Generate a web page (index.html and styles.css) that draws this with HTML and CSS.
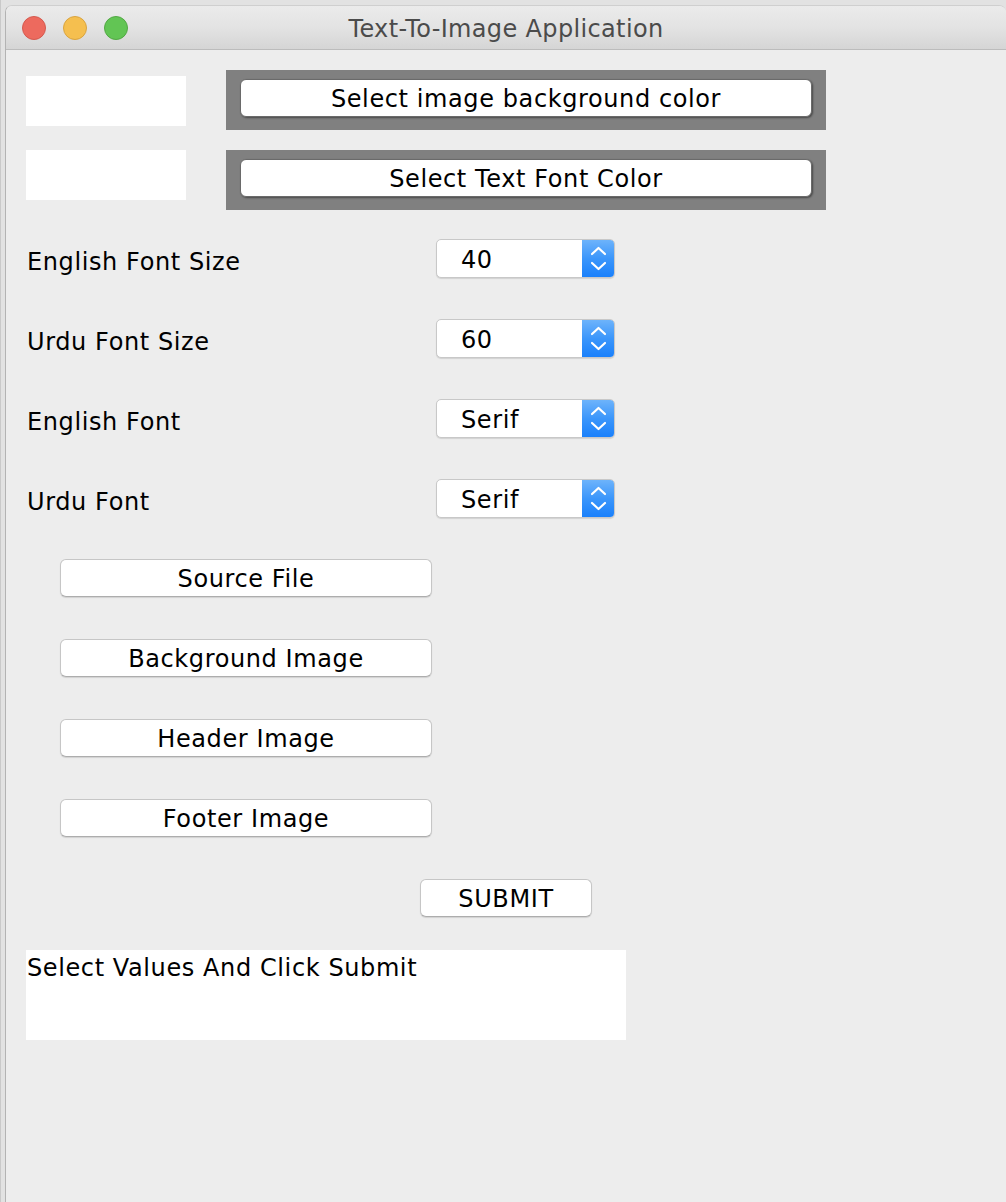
FILE: index.html
```html
<!DOCTYPE html>
<html>
<head>
<meta charset="utf-8">
<title>Text-To-Image Application</title>
<link rel="stylesheet" href="styles.css">
</head>
<body>
<div class="desktop">
  <div class="window">
    <div class="titlebar">
      <div class="lights">
        <span class="light red"></span>
        <span class="light yellow"></span>
        <span class="light green"></span>
      </div>
      <div class="title">Text-To-Image Application</div>
      <div></div>
    </div>
    <div class="content">
      <div class="color-row first">
        <div class="swatch offset"></div>
        <div class="panel"><button class="btn wide">Select image background color</button></div>
      </div>
      <div class="color-row second">
        <div class="swatch"></div>
        <div class="panel"><button class="btn wide">Select Text Font Color</button></div>
      </div>

      <div class="field first-field">
        <div class="label">English Font Size</div>
        <div class="combo"><span class="combo-value">40</span><span class="combo-arrows"><svg width="32" height="37" viewBox="0 0 32 37"><polyline points="10,14 16.5,8 23,14" /><polyline points="10,23 16.5,29 23,23" /></svg></span></div>
      </div>
      <div class="field">
        <div class="label">Urdu Font Size</div>
        <div class="combo"><span class="combo-value">60</span><span class="combo-arrows"><svg width="32" height="37" viewBox="0 0 32 37"><polyline points="10,14 16.5,8 23,14" /><polyline points="10,23 16.5,29 23,23" /></svg></span></div>
      </div>
      <div class="field">
        <div class="label">English Font</div>
        <div class="combo"><span class="combo-value">Serif</span><span class="combo-arrows"><svg width="32" height="37" viewBox="0 0 32 37"><polyline points="10,14 16.5,8 23,14" /><polyline points="10,23 16.5,29 23,23" /></svg></span></div>
      </div>
      <div class="field">
        <div class="label">Urdu Font</div>
        <div class="combo"><span class="combo-value">Serif</span><span class="combo-arrows"><svg width="32" height="37" viewBox="0 0 32 37"><polyline points="10,14 16.5,8 23,14" /><polyline points="10,23 16.5,29 23,23" /></svg></span></div>
      </div>

      <div class="file-buttons">
        <button class="btn file">Source File</button>
        <button class="btn file">Background Image</button>
        <button class="btn file">Header Image</button>
        <button class="btn file">Footer Image</button>
      </div>

      <div class="submit-row">
        <button class="btn submit">SUBMIT</button>
      </div>

      <div class="status">Select Values And Click Submit</div>
    </div>
  </div>
</div>
</body>
</html>
```

FILE: styles.css
```css
html, body {
  margin: 0;
  padding: 0;
}
body {
  width: 1006px;
  height: 1202px;
  overflow: hidden;
  background: #e3e3e3;
  font-family: "DejaVu Sans", "Liberation Sans", sans-serif;
}
.desktop {
  display: flex;
  height: 1202px;
  background: linear-gradient(to right, #c9c9c9 0, #c9c9c9 1px, #e2e2e2 1px, #e2e2e2 100%);
}
.window {
  flex: 1;
  margin-top: 5px;
  margin-left: 5px;
  border-left: 1px solid #b3b3b3;
  border-top: 1px solid #cfcfcf;
  border-top-left-radius: 7px;
  border-top-right-radius: 7px;
  background: #ededed;
  overflow: hidden;
  display: flex;
  flex-direction: column;
}
.titlebar {
  height: 43px;
  flex: 0 0 43px;
  border-bottom: 1px solid #bcbcbc;
  background: linear-gradient(to bottom, #ebebeb 0%, #e3e3e3 50%, #d5d5d5 100%);
  display: grid;
  grid-template-columns: 1fr auto 1fr;
  align-items: center;
}
.lights {
  display: flex;
  gap: 17px;
  padding-left: 16px;
  padding-top: 1px;
}
.light {
  width: 22px;
  height: 22px;
  border-radius: 50%;
  display: block;
}
.red { background: #ed6a5e; border: 1px solid #d45a4f; }
.yellow { background: #f5bf4f; border: 1px solid #d9a440; }
.green { background: #62c554; border: 1px solid #52a844; }
.title {
  font-size: 24px;
  letter-spacing: 0.35px;
  color: #4b4b4b;
  white-space: nowrap;
  padding-top: 2px;
}
.content {
  padding-left: 20px;
  flex: 1;
}
.color-row {
  display: flex;
  gap: 40px;
  align-items: flex-start;
  margin-top: 20px;
}
.swatch {
  width: 160px;
  height: 50px;
  background: #ffffff;
}
.swatch.offset {
  margin-top: 6px;
}
.panel {
  width: 600px;
  height: 60px;
  box-sizing: border-box;
  padding: 9px 14px 13px 14px;
  background: #808080;
}
.btn {
  display: block;
  margin: 0;
  padding: 2px 0 0 0;
  font-family: "DejaVu Sans", "Liberation Sans", sans-serif;
  font-size: 24px;
  letter-spacing: 0.6px;
  color: #000;
  background: #ffffff;
  border: 1px solid #c6c6c6;
  border-bottom-color: #adadad;
  border-radius: 6px;
  box-shadow: 0 1px 1px rgba(0, 0, 0, 0.12);
  box-sizing: border-box;
  height: 38px;
  line-height: 34px;
  text-align: center;
}
.btn.wide {
  width: 572px;
  border-color: #6a6a6a;
  box-shadow: 1px 1px 2px rgba(0, 0, 0, 0.45);
}
.field {
  display: flex;
  align-items: flex-start;
  height: 39px;
  margin-top: 41px;
}
.field.first-field {
  margin-top: 29px;
}
.label {
  flex: 0 0 409px;
  padding-left: 1px;
  padding-top: 9px;
  font-size: 24px;
  letter-spacing: 0.6px;
  line-height: 28px;
  color: #000;
}
.combo {
  width: 179px;
  height: 39px;
  box-sizing: border-box;
  display: flex;
  background: #ffffff;
  border: 1px solid #c8c8c8;
  border-radius: 5px;
  box-shadow: 0 1px 1px rgba(0, 0, 0, 0.12);
  overflow: hidden;
}
.combo-value {
  flex: 1;
  padding-left: 24px;
  padding-top: 4px;
  font-size: 24px;
  letter-spacing: 0.6px;
  line-height: 33px;
  color: #000;
}
.combo-arrows {
  flex: 0 0 32px;
  height: 37px;
  background: linear-gradient(to bottom, #6db3fb 0%, #3b96fb 50%, #1a80fb 100%);
}
.combo-arrows svg {
  display: block;
}
.combo-arrows polyline {
  fill: none;
  stroke: #ffffff;
  stroke-width: 2.2;
  stroke-linecap: round;
  stroke-linejoin: round;
}
.file-buttons {
  display: flex;
  flex-direction: column;
  gap: 42px;
  margin-top: 41px;
  padding-left: 34px;
}
.btn.file {
  width: 372px;
}
.submit-row {
  margin-top: 42px;
  padding-left: 394px;
}
.btn.submit {
  width: 172px;
}
.status {
  margin-top: 33px;
  width: 600px;
  height: 90px;
  box-sizing: border-box;
  background: #ffffff;
  padding-left: 1px;
  padding-top: 4px;
  font-size: 24px;
  letter-spacing: 0.6px;
  line-height: 28px;
  color: #000;
}
```
